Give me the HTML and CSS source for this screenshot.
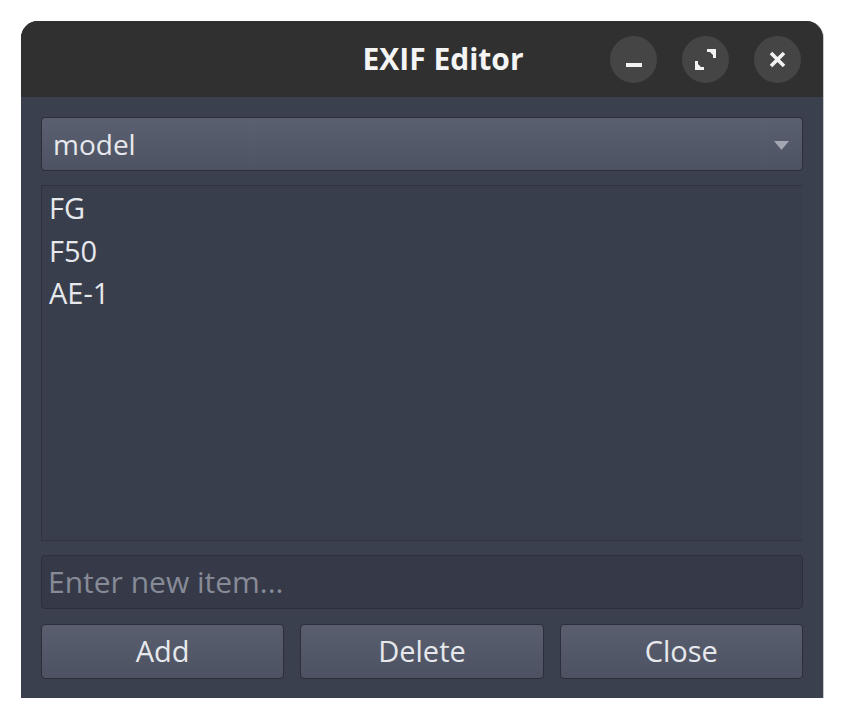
FILE: index.html
```html
<!DOCTYPE html>
<html>
<head>
<meta charset="utf-8">
<link rel="stylesheet" href="styles.css">
</head>
<body>
<div class="window">
  <div class="titlebar">
    <div class="title">EXIF Editor</div>
    <div class="controls">
      <div class="ctl">
        <svg width="47" height="47" viewBox="0 0 47 47"><rect x="16" y="27" width="16" height="4" fill="#f2f2f2"/></svg>
      </div>
      <div class="ctl">
        <svg width="47" height="47" viewBox="0 0 47 47"><path d="M25 13 H34 V22 L31 22 L31 19 L28 16 L25 16 Z M13 25 L16 25 L16 28 L19 31 L22 31 L22 34 L13 34 Z" fill="#f2f2f2"/></svg>
      </div>
      <div class="ctl">
        <svg width="47" height="47" viewBox="0 0 47 47"><path d="M17 17 L30 30 M30 17 L17 30" stroke="#f2f2f2" stroke-width="3.6" stroke-linecap="butt"/></svg>
      </div>
    </div>
  </div>
  <div class="content">
    <div class="combo">
      <span class="combo-text">model</span>
      <svg class="arrow" width="15" height="9" viewBox="0 0 15 9"><path d="M0 0 H15 L7.5 9 Z" fill="#a3a7b2"/></svg>
    </div>
    <div class="list">
      <div class="item">FG</div>
      <div class="item">F50</div>
      <div class="item">AE-1</div>
    </div>
    <div class="input">
      <span class="placeholder">Enter new item...</span>
    </div>
    <div class="buttons">
      <div class="btn">Add</div>
      <div class="btn">Delete</div>
      <div class="btn">Close</div>
    </div>
  </div>
</div>
</body>
</html>
```
FILE: styles.css
```css
* {
  box-sizing: border-box;
}
html, body {
  margin: 0;
  padding: 0;
  background: #ffffff;
}
body {
  font-family: "Open Sans", "Noto Sans", sans-serif;
  color: #e6e8ec;
}
.window {
  margin: 21px 0 0 21px;
  width: 802px;
  height: 677px;
  border-radius: 17px 17px 0 0;
  overflow: hidden;
  background: #3b404f;
  display: flex;
  flex-direction: column;
  box-shadow: 1px 0 0 #c8c8c8;
}
.titlebar {
  flex-shrink: 0;
  height: 76px;
  background: #303030;
  display: flex;
  align-items: center;
  padding: 0 22px 0 280px;
  gap: 25px;
}
.title {
  flex: 1;
  text-align: center;
  font-weight: 700;
  font-size: 30px;
  color: #f4f4f4;
  padding-bottom: 2px;
}
.controls {
  display: flex;
  gap: 25px;
}
.ctl {
  width: 47px;
  height: 47px;
  border-radius: 50%;
  background: #454545;
}
.ctl svg {
  display: block;
}
.content {
  flex: 1;
  padding: 20px 20px 20px 20px;
  display: flex;
  flex-direction: column;
}
.combo {
  height: 54px;
  border: 1px solid #2b2f3a;
  border-radius: 4px;
  background: linear-gradient(#5b6070, #4e5364);
  display: flex;
  align-items: center;
  padding: 2px 13px 0 11px;
  font-size: 28px;
}
.combo-text {
  flex: 1;
  padding-bottom: 2px;
}
.list {
  margin-top: 14px;
  height: 356px;
  border: 1px solid #2f3340;
  border-right-color: #3b404f;
  background: #393e4c;
  padding: 1px 8px 0 7px;
  font-size: 29px;
}
.item {
  height: 42.5px;
  line-height: 42.5px;
}
.input {
  margin-top: 14px;
  height: 54px;
  border: 1px solid #2c303b;
  border-radius: 4px;
  background: #363a48;
  display: flex;
  align-items: center;
  padding: 0 6px;
  font-size: 30px;
}
.placeholder {
  color: #878b97;
  padding-bottom: 2px;
}
.buttons {
  margin-top: 15px;
  display: grid;
  grid-template-columns: 1fr 1fr 1fr;
  gap: 16px;
}
.btn {
  height: 55px;
  border: 1px solid #2b2f3a;
  border-radius: 4px;
  background: linear-gradient(#5a5f6f, #4d5263);
  display: flex;
  align-items: center;
  justify-content: center;
  font-size: 29px;
  padding-bottom: 2px;
}
```
